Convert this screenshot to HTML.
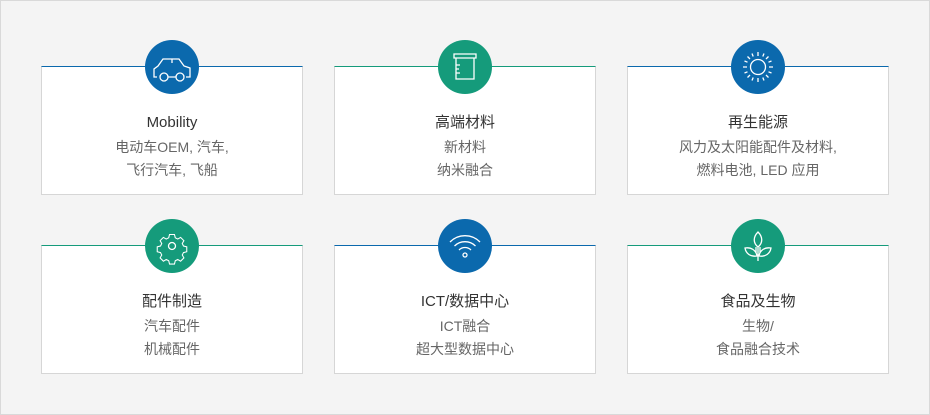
<!DOCTYPE html>
<html><head><meta charset="utf-8"><style>
*{margin:0;padding:0;box-sizing:border-box}
html,body{width:930px;height:415px}
body{background:#f4f4f4;position:relative;overflow:hidden;font-family:"Liberation Sans","Noto Sans CJK SC",sans-serif}
.frame{position:absolute;left:0;top:0;width:930px;height:415px;border:1px solid #d9d9d9}
.card{position:absolute;width:262px;height:129px;background:#fff;border:1px solid #d6d6d6;text-align:center}
.b{border-top:1px solid #0b69ad}.g{border-top:1px solid #159b7b}
.ic{position:absolute;left:103px;top:-27px;width:54px;height:54px;border-radius:50%}
.b .ic{background:#0b69ad}.g .ic{background:#159b7b}
.ic svg{display:block;width:54px;height:54px}
.t{position:absolute;top:46px;left:0;right:0;font-size:15px;color:#333;line-height:20px}
.d{position:absolute;top:69px;left:0;right:0;font-size:14px;color:#666;line-height:23px}
</style></head><body><div class="frame"></div>
<div class="card b" style="left:41px;top:66px"><div class="ic"><svg viewBox="0 0 54 54" fill="none" stroke="#fff" stroke-width="1.3"><path d="M12 37h-3V29l4-3 5-7h16l5 7 6 2v9h-4M23 37h8M27 19v4"/><circle cx="19" cy="37" r="4"/><circle cx="35" cy="37" r="4"/></svg></div><div class="t">Mobility</div><div class="d">电动车OEM, 汽车,<br>飞行汽车, 飞船</div></div>
<div class="card g" style="left:334px;top:66px"><div class="ic"><svg viewBox="0 0 54 54" fill="none" stroke="#fff" stroke-width="1.3"><path d="M16 14h22v4H16zM18 18v21h18V18M18 25h4M18 29h3M18 33h4"/></svg></div><div class="t">高端材料</div><div class="d">新材料<br>纳米融合</div></div>
<div class="card b" style="left:627px;top:66px"><div class="ic"><svg viewBox="0 0 54 54" fill="none" stroke="#fff" stroke-width="1.3"><circle cx="27" cy="27" r="7.5"/><path d="M27 12v4M27 38v4M12 27h4M38 27h4M16.5 16.5l2.5 2.5M35 35l2.5 2.5M37.5 16.5L35 19M19 35l-2.5 2.5M21 13.5l1.2 3M33 13.5l-1.2 3M21 40.5l1.2-3M33 40.5l-1.2-3M13.5 21l3 1.2M40.5 21l-3 1.2M13.5 33l3-1.2M40.5 33l-3-1.2"/></svg></div><div class="t">再生能源</div><div class="d">风力及太阳能配件及材料,<br>燃料电池, LED 应用</div></div>
<div class="card g" style="left:41px;top:245px"><div class="ic"><svg viewBox="0 0 54 54" fill="none" stroke="#fff" stroke-width="1.3"><g transform="translate(27 27) scale(0.82) translate(-27 -24)"><path d="M24 13h6l1 4 3 1.5 3.5-2 4 4-2 3.5 1.5 3 4 1v6l-4 1-1.5 3 2 3.5-4 4-3.5-2-3 1.5-1 4h-6l-1-4-3-1.5-3.5 2-4-4 2-3.5-1.5-3-4-1v-6l4-1 1.5-3-2-3.5 4-4 3.5 2 3-1.5z" transform="translate(0 -3)"/></g><circle cx="27" cy="27" r="3.5"/></svg></div><div class="t">配件制造</div><div class="d">汽车配件<br>机械配件</div></div>
<div class="card b" style="left:334px;top:245px"><div class="ic"><svg viewBox="0 0 54 54" fill="none" stroke="#fff" stroke-width="1.3"><path d="M12 23a21 21 0 0 1 30 0M16.5 27a15 15 0 0 1 21 0M21 31a8.5 8.5 0 0 1 12 0"/><circle cx="27" cy="36" r="2"/></svg></div><div class="t">ICT/数据中心</div><div class="d">ICT融合<br>超大型数据中心</div></div>
<div class="card g" style="left:627px;top:245px"><div class="ic"><svg viewBox="0 0 54 54" fill="none" stroke="#fff" stroke-width="1.3"><path d="M27 13c-5 5-5 11 0 15 5-4 5-10 0-15zM27 28v14M26 37c-6 1-11-2-12-8 6-1 11 2 12 8zM28 37c6 1 11-2 12-8-6-1-11 2-12 8zM25 28v6M29 28v6"/></svg></div><div class="t">食品及生物</div><div class="d">生物/<br>食品融合技术</div></div>
</body></html>
